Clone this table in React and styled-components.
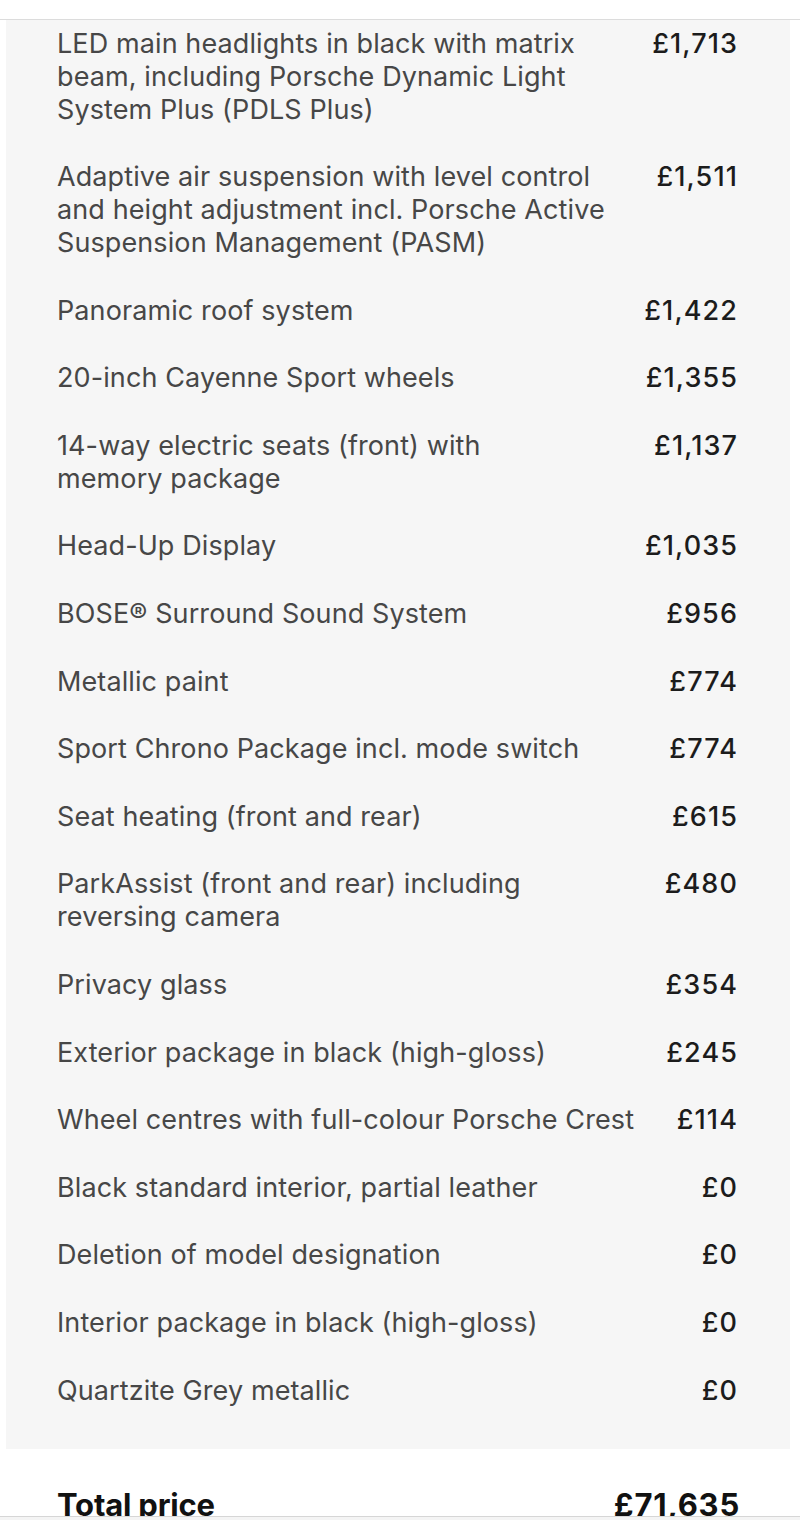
import React from "react";
import styled, { createGlobalStyle } from "styled-components";

const options = [
  {
    name: [
      "LED main headlights in black with matrix",
      "beam, including Porsche Dynamic Light",
      "System Plus (PDLS Plus)",
    ],
    price: "£1,713",
  },
  {
    name: [
      "Adaptive air suspension with level control",
      "and height adjustment incl. Porsche Active",
      "Suspension Management (PASM)",
    ],
    price: "£1,511",
  },
  { name: ["Panoramic roof system"], price: "£1,422" },
  { name: ["20-inch Cayenne Sport wheels"], price: "£1,355" },
  {
    name: ["14-way electric seats (front) with", "memory package"],
    price: "£1,137",
  },
  { name: ["Head-Up Display"], price: "£1,035" },
  { name: ["BOSE® Surround Sound System"], price: "£956" },
  { name: ["Metallic paint"], price: "£774" },
  { name: ["Sport Chrono Package incl. mode switch"], price: "£774" },
  { name: ["Seat heating (front and rear)"], price: "£615" },
  {
    name: ["ParkAssist (front and rear) including", "reversing camera"],
    price: "£480",
  },
  { name: ["Privacy glass"], price: "£354" },
  { name: ["Exterior package in black (high-gloss)"], price: "£245" },
  { name: ["Wheel centres with full-colour Porsche Crest"], price: "£114" },
  { name: ["Black standard interior, partial leather"], price: "£0" },
  { name: ["Deletion of model designation"], price: "£0" },
  { name: ["Interior package in black (high-gloss)"], price: "£0" },
  { name: ["Quartzite Grey metallic"], price: "£0" },
];

export default function App() {
  return (
    <>
      <GlobalStyle />
      <Page>
        <Summary>
          {options.map(({ name, price }, i) => (
            <Row key={i}>
              <Name>
                {name.map((line, j) => (
                  <span key={j}>{line}</span>
                ))}
              </Name>
              <Price>{price}</Price>
            </Row>
          ))}
        </Summary>
        <TotalWrap>
          <Total>
            <span>Total price</span>
            <TotalAmount>£71,635</TotalAmount>
          </Total>
        </TotalWrap>
        <BottomBar />
      </Page>
    </>
  );
}

const GlobalStyle = createGlobalStyle`
  html, body {
    margin: 0;
    padding: 0;
    background: #ffffff;
  }
  body {
    font-family: Inter, "Noto Sans", "Liberation Sans", sans-serif;
    -webkit-font-smoothing: antialiased;
  }
`;

const Page = styled.div`
  width: 800px;
  height: 1520px;
  overflow: hidden;
  padding-top: 19px;
  box-sizing: border-box;
`;

// grey option list, inset 6px from the left edge and 10px from the right
const Summary = styled.div`
  border-top: 1px solid #dcdcdc;
  background: linear-gradient(#ffffff, #ffffff) left / 6px 100% no-repeat,
    linear-gradient(#ffffff, #ffffff) right / 10px 100% no-repeat, #f6f6f6;
  padding: 6.5px 62px 42.5px 57px;
  display: flex;
  flex-direction: column;
  gap: 34.6px;
`;

const Row = styled.div`
  display: flex;
  justify-content: space-between;
  align-items: flex-start;
  gap: 16px;
`;

const Name = styled.div`
  display: flex;
  flex-direction: column;
  font-size: 27px;
  line-height: 33px;
  color: #474747;
  letter-spacing: 0.1px;
  white-space: nowrap;
`;

const Price = styled.div`
  font-size: 27px;
  line-height: 33px;
  font-weight: 500;
  color: #1c1c1c;
  letter-spacing: 1.1px;
  white-space: nowrap;
`;

const TotalWrap = styled.div`
  height: 67px;
  overflow: hidden;
  display: flex;
  align-items: flex-end;
`;

const Total = styled.div`
  flex: 1;
  display: flex;
  justify-content: space-between;
  padding: 0 60px 0 57px;
  margin-bottom: -4px;
  font-size: 31px;
  line-height: 31px;
  font-weight: 700;
  letter-spacing: -0.2px;
  color: #111111;
`;

const TotalAmount = styled.span`
  letter-spacing: 0.8px;
`;

const BottomBar = styled.div`
  border-top: 1px solid #d6d6d6;
  height: 3px;
  background: #f4f4f4;
`;
